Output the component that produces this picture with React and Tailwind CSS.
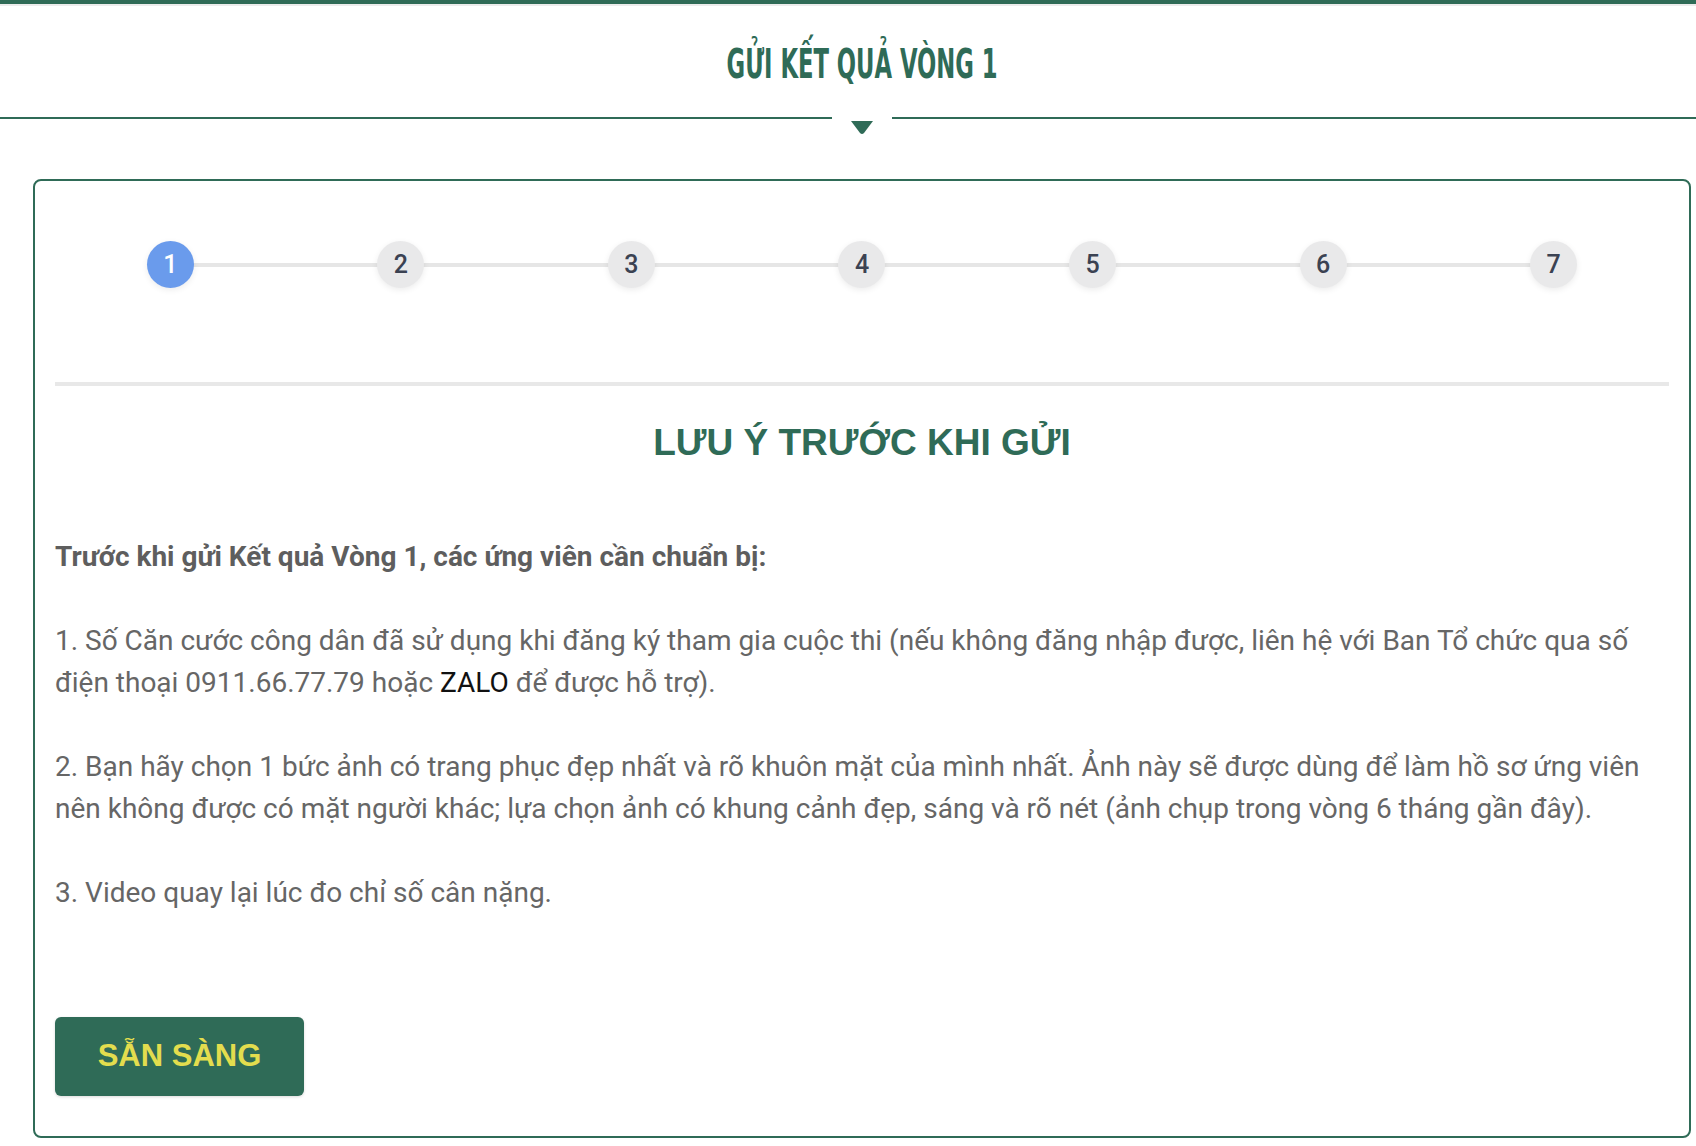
import React from 'react'

const steps = [1, 2, 3, 4, 5, 6, 7]

function Stepper({ current }) {
  return (
    <div className="relative grid grid-cols-7">
      {/* connector behind the circles */}
      <div className="absolute left-[7.14%] right-[7.14%] top-[22px] h-1 bg-[#e6e6e6]" />
      {steps.map((n) => (
        <div key={n} className="relative flex justify-center">
          <div
            className={`w-[47px] h-[47px] rounded-full flex items-center justify-center text-[25px] font-medium
              shadow-[0_2px_6px_rgba(0,0,0,0.08)]
              ${n === current ? 'bg-[#6a9bec] text-white' : 'bg-[#e9e9ea] text-[#3b4252]'}`}
          >
            {n}
          </div>
        </div>
      ))}
    </div>
  )
}

export default function App() {
  return (
    <div className="min-h-screen bg-white font-['Roboto',sans-serif]">
      {/* top bar */}
      <div className="h-1 bg-[#2f6b57]" />
      <div className="h-[2px] bg-[#ececec]" />

      {/* section header */}
      <div className="ml-[33px] mr-[5px] mt-[38px] text-center">
        <h1 className="inline-block scale-x-[0.63] text-[40px] leading-none font-bold text-[#2f6b57] font-['Liberation_Sans_Narrow','DejaVu_Sans_Condensed',sans-serif]">
          GỬI KẾT QUẢ VÒNG 1
        </h1>
      </div>
      <div className="flex items-start mt-8">
        <div className="w-[832px] h-[2px] bg-[#2f6b57]" />
        <div className="w-[60px] flex justify-center">
          <svg width="22" height="13" viewBox="0 0 22 13" className="mt-1">
            <path d="M0 0 H22 L13 12 Q11 14 9 12 Z" fill="#2f6b57" />
          </svg>
        </div>
        <div className="flex-1 h-[2px] bg-[#2f6b57]" />
      </div>

      {/* card */}
      <div className="ml-[33px] mr-[5px] mt-[45px] border-2 border-[#2f6b57] rounded-lg px-5 pt-[60px] pb-10">
        <Stepper current={1} />

        <div className="mt-[94px] h-1 bg-[#e8e8e8]" />

        <h2 className="mt-[38px] text-center text-[37px] leading-none font-bold text-[#2f6b57] font-['Liberation_Sans',Arial,sans-serif]">
          LƯU Ý TRƯỚC KHI GỬI
        </h2>

        <div className="mt-[75px] text-[28px] leading-[42px] text-[#666666]">
          <p className="font-bold text-[#5e5e5e]">
            Trước khi gửi Kết quả Vòng 1, các ứng viên cần chuẩn bị:
          </p>
          <p className="mt-[42px]">
            1. Số Căn cước công dân đã sử dụng khi đăng ký tham gia cuộc thi (nếu không đăng nhập được, liên hệ với Ban Tổ chức qua số điện thoại 0911.66.77.79 hoặc <span className="text-[#111111]">ZALO</span> để được hỗ trợ).
          </p>
          <p className="mt-[42px]">
            2. Bạn hãy chọn 1 bức ảnh có trang phục đẹp nhất và rõ khuôn mặt của mình nhất. Ảnh này sẽ được dùng để làm hồ sơ ứng viên nên không được có mặt người khác; lựa chọn ảnh có khung cảnh đẹp, sáng và rõ nét (ảnh chụp trong vòng 6 tháng gần đây).
          </p>
          <p className="mt-[42px]">3. Video quay lại lúc đo chỉ số cân nặng.</p>
        </div>

        <button className="mt-[103px] w-[249px] h-[79px] rounded-md bg-[#2f6b57] flex items-center justify-center text-[31px] font-bold text-[#e3dd4e] shadow-[0_1px_3px_rgba(0,0,0,0.15)] font-['Liberation_Sans',Arial,sans-serif]">
          SẴN SÀNG
        </button>
      </div>
    </div>
  )
}
